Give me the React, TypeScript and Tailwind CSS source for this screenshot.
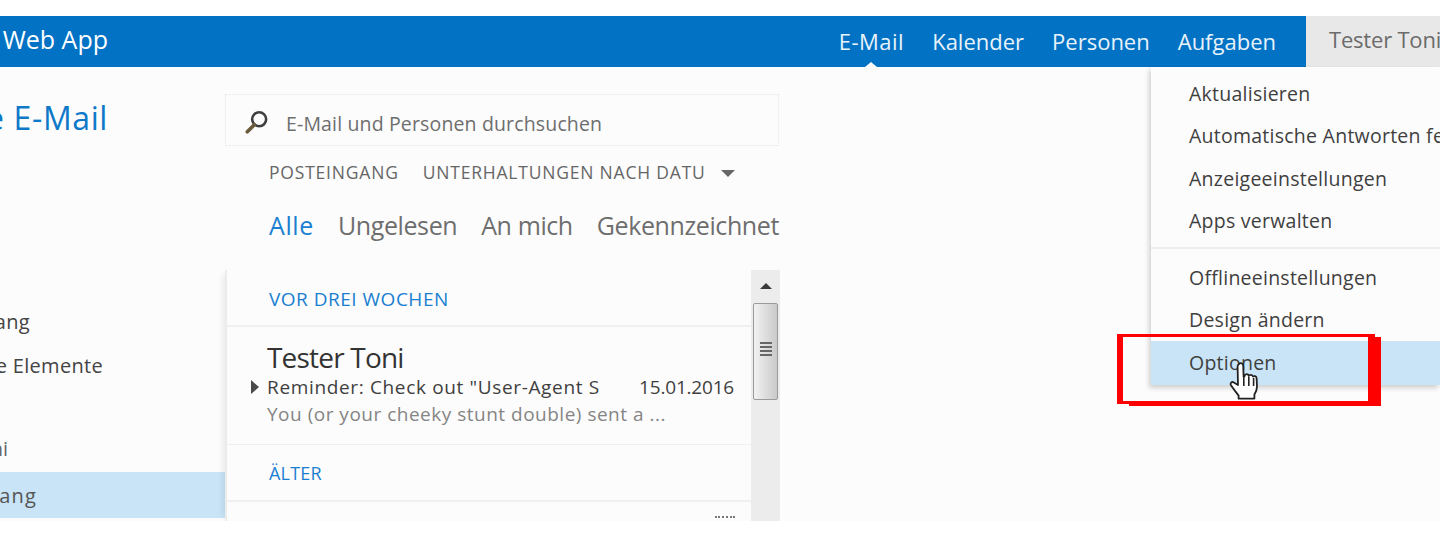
const NAV = ['E-Mail', 'Kalender', 'Personen', 'Aufgaben'];
const FILTERS = ['Ungelesen', 'An mich', 'Gekennzeichnet'];
const MENU_TOP = ['Aktualisieren', 'Automatische Antworten festlegen', 'Anzeigeeinstellungen', 'Apps verwalten'];

function SearchIcon() {
  return (
    <svg width="28" height="28" viewBox="0 0 26 26" fill="none" className="mt-[4px]">
      <circle cx="15" cy="10.5" r="6.5" stroke="#3f3f3f" strokeWidth="2.4" />
      <path d="M10.5 15.5L4 22" stroke="#6b5a3c" strokeWidth="3.4" strokeLinecap="round" />
    </svg>
  );
}

function HandCursor() {
  return (
    <svg width="32" height="42" viewBox="0 0 32 42">
      <path
        d="M10 3c1.8-1.6 4-.8 4.2 1.6l.4 11 1-.4c.4-2.6 3.6-2.6 4.2-.2 .8-1.8 3.6-1.6 4.2.6 1-1 3.4-.6 3.6 1.6l.4 8c0 3-1 6-2.6 8.4v4H9.6v-3c-2.2-3-5.4-7-7.6-10.4-1.2-2 .8-4 2.8-2.8L9 24 8.6 5.4C8.6 4.4 9.2 3.6 10 3z"
        fill="#ffffff"
        stroke="#222222"
        strokeWidth="1.8"
        strokeLinejoin="round"
      />
      <path d="M14.8 16v9M19.8 16v9M24.6 17v8" stroke="#222222" strokeWidth="1.6" />
    </svg>
  );
}

export default function App() {
  return (
    <div className="relative h-[534px] w-[1440px] overflow-hidden bg-white pt-4 font-['Open_Sans','Noto_Sans',sans-serif]">
      {/* top bar */}
      <header className="flex h-[51px] items-stretch bg-[#0272c4]">
        <div className="w-[108px] overflow-hidden">
          <div className="flex h-full items-center justify-end whitespace-nowrap pb-1 text-[25px] text-white">
            Outlook Web App
          </div>
        </div>
        <nav className="ml-auto flex items-center gap-7 pr-[30px] text-[22px] text-[#e8f2fa]">
          {NAV.map((item, i) => (
            <span key={item} className={i === 0 ? 'relative flex h-full items-center tracking-[0.5px]' : 'relative flex h-full items-center'}>
              {item}
              {i === 0 && (
                <span className="absolute bottom-0 left-1/2 h-0 w-0 -translate-x-1/2 border-x-[6px] border-b-[5px] border-x-transparent border-b-[#fcfcfc]" />
              )}
            </span>
          ))}
        </nav>
        <div className="flex w-[134px] items-center overflow-hidden whitespace-nowrap bg-[#e8e8e8] pb-1 pl-[23px] text-[22px] tracking-[-0.2px] text-[#6b6b6b]">
          Tester Toni
        </div>
      </header>

      <main className="flex h-[454px] overflow-hidden bg-[#fcfcfc]">
        {/* folder list */}
        <aside className="w-[225px] shrink-0">
          <div className="mt-[31px] flex h-[40px] w-[108px] items-center justify-end overflow-hidden whitespace-nowrap text-[32px] tracking-[0.6px] text-[#0f79c9]">
            Ungelesene E-Mail
          </div>
          <div className="mt-[162px] flex h-[44px] w-[30px] items-center justify-end overflow-hidden whitespace-nowrap text-[20px] tracking-[0.3px] text-[#444444]">
            Posteingang
          </div>
          <div className="flex h-[44px] w-[103px] items-center justify-end overflow-hidden whitespace-nowrap text-[20px] tracking-[0.3px] text-[#444444]">
            Gelöschte Elemente
          </div>
          <div className="mt-[39px] flex h-[44px] w-[8px] items-center justify-end overflow-hidden whitespace-nowrap text-[20px] text-[#666666]">
            Toni
          </div>
          <div className="mt-[1px] flex h-[46px] items-center bg-[#c8e4f6] pt-[2px]">
            <div className="flex w-[37px] justify-end overflow-hidden whitespace-nowrap text-[20px] tracking-[1.2px] text-[#555555]">
              Posteingang
            </div>
          </div>
        </aside>

        {/* mail list */}
        <section className="w-[555px] shrink-0">
          <div className="mt-[27px] flex h-[52px] w-[554px] items-center gap-[15px] border border-dotted border-[#dfe8ef] pl-[17px]">
            <SearchIcon />
            <span className="whitespace-nowrap pt-[8px] text-[19.5px] tracking-[0.15px] text-[#6e6e6e]">
              E-Mail und Personen durchsuchen
            </span>
          </div>
          <div className="mt-[12px] flex h-[28px] items-center pl-[44px] text-[17.5px] tracking-[0.8px] text-[#666666]">
            <span>POSTEINGANG</span>
            <span className="ml-[24px]">UNTERHALTUNGEN NACH DATU</span>
            <span className="ml-[15px] mt-[3px] h-0 w-0 border-x-[7px] border-t-[7px] border-x-transparent border-t-[#666666]" />
          </div>
          <div className="mt-[22px] flex h-[36px] items-center gap-6 pl-[44px] text-[25px] tracking-[-0.4px] text-[#6e6e6e]">
            <span className="w-[45px] tracking-[0.6px] text-[#1a7fd0]">Alle</span>
            {FILTERS.map((f) => (
              <span key={f}>{f}</span>
            ))}
          </div>

          <div className="mt-[26px] flex h-[251px] border-l-2 border-[#ececec] shadow-[-6px_0_6px_-4px_rgba(0,0,0,0.08)]">
            <div className="min-w-0 flex-1">
              <div className="flex h-[57px] items-center border-b-2 border-[#f0f0f0] pl-[42px] pt-[3px] text-[19px] tracking-[0.5px] text-[#1a7fd0]">
                VOR DREI WOCHEN
              </div>
              <div className="relative h-[118px] border-b border-[#f0f0f0] pl-[40px] pt-[14px]">
                <div className="text-[28px] leading-[33px] tracking-[-0.8px] text-[#333333]">Tester Toni</div>
                <div className="flex h-[26px] items-center justify-between pr-[17px] text-[19px] text-[#3f3f3f]">
                  <span className="w-[333px] overflow-hidden whitespace-nowrap tracking-[0.65px]">
                    Reminder: Check out "User-Agent S
                  </span>
                  <span className="tracking-[-0.2px]">15.01.2016</span>
                </div>
                <div className="h-[28px] whitespace-nowrap text-[19px] leading-[28px] tracking-[0.5px] text-[#858585]">
                  You (or your cheeky stunt double) sent a ...
                </div>
                <span className="absolute left-[24px] top-[53px] h-0 w-0 border-y-[7px] border-l-[8px] border-y-transparent border-l-[#4a4a4a]" />
              </div>
              <div className="flex h-[57px] items-center border-b-2 border-[#f0f0f0] pl-[42px] pt-[2px] text-[18px] tracking-[0.2px] text-[#1a7fd0]">
                ÄLTER
              </div>
              <div className="flex justify-end pr-[16px] pt-[14px]">
                <span className="h-[8px] w-[20px] border-t-2 border-dotted border-[#777777]" />
              </div>
            </div>
            {/* scrollbar */}
            <div className="flex w-[29px] shrink-0 flex-col items-center bg-[#ececec]">
              <span className="mt-[13px] h-0 w-0 border-x-[6px] border-b-[6px] border-x-transparent border-b-[#3a3a3a]" />
              <div className="mt-[14px] flex h-[97px] w-[25px] flex-col items-center justify-center gap-[2px] rounded-[2px] border border-[#9a9a9a] bg-gradient-to-r from-[#f2f2f2] to-[#c9c9c9] pb-[6px]">
                <span className="h-[2px] w-[12px] bg-[#666666]" />
                <span className="h-[2px] w-[12px] bg-[#666666]" />
                <span className="h-[2px] w-[12px] bg-[#666666]" />
                <span className="h-[2px] w-[12px] bg-[#666666]" />
              </div>
            </div>
          </div>
        </section>
      </main>

      {/* user menu */}
      <div className="absolute left-[1151px] top-[67px] w-[289px] bg-[#fcfcfc] text-[19.5px] tracking-[0.25px] text-[#3f3f3f] shadow-[-2px_3px_5px_rgba(0,0,0,0.18)]">
        <div className="border-b-2 border-[#ececec] pb-[5px] pt-[5px]">
          {MENU_TOP.map((item) => (
            <div key={item} className="flex h-[42.5px] items-center overflow-hidden whitespace-nowrap pl-[38px]">
              {item}
            </div>
          ))}
        </div>
        <div className="pt-[7px]">
          <div className="flex h-[42.5px] items-center pl-[38px]">Offlineeinstellungen</div>
          <div className="flex h-[42.5px] items-center pl-[38px]">Design ändern</div>
          <div className="flex h-[44px] items-center bg-[#c8e4f6] pl-[38px]">Optionen</div>
        </div>
      </div>

      {/* annotation */}
      <div className="absolute left-[1117px] top-[334px] h-[70px] w-[252px] border-y-[3px] border-l-[6px] border-[#ff0000]" />
      <div className="absolute left-[1368px] top-[334px] h-[3px] w-[7px] bg-[#ff0000]" />
      <div className="absolute left-[1368px] top-[337px] h-[69px] w-[13px] bg-[#ff0000]" />
      <div className="absolute left-[1129px] top-[403px] h-[3px] w-[240px] bg-[#ff0000]" />
      <div className="absolute left-[1229px] top-[361px]">
        <HandCursor />
      </div>
    </div>
  );
}
